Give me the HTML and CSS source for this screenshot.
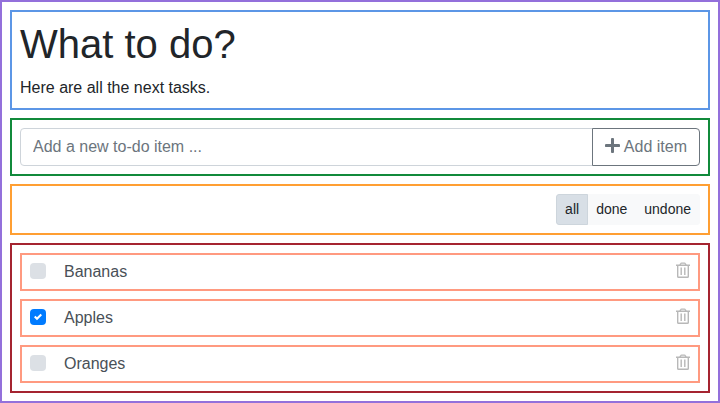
FILE: index.html
```html
<!DOCTYPE html>
<html lang="en">
<head>
<meta charset="utf-8">
<title>What to do?</title>
<link rel="stylesheet" href="styles.css">
</head>
<body>
<main class="app">
  <header class="intro">
    <h1>What to do?</h1>
    <p>Here are all the next tasks.</p>
  </header>
  <form class="new-item">
    <input class="new-input" type="text" placeholder="Add a new to-do item ..." aria-label="New item">
    <button class="add" type="button">
      <svg class="plus" width="15" height="15" viewBox="0 0 15 15" aria-hidden="true"><path d="M7.5 1.3v12.4M1.3 7.5h12.4" fill="none" stroke="currentColor" stroke-width="3" stroke-linecap="round"/></svg>
      <span>Add item</span>
    </button>
  </form>
  <nav class="filters">
    <div class="group">
      <button class="filter active" type="button">all</button>
      <button class="filter" type="button">done</button>
      <button class="filter" type="button">undone</button>
    </div>
  </nav>
  <ul class="list">
    <li class="item">
      <span class="check"></span>
      <span class="label">Bananas</span>
      <svg class="trash" width="14" height="17" viewBox="0 0 14 17" aria-hidden="true"><path d="M0 3.2h14M4 2.8l.8-1.3q.2-.4.7-.4h3q.5 0 .7.4l.8 1.3M1.7 3.4v11q0 .9.9.9h8.8q.9 0 .9-.9v-11M5.2 5.5v7.6M8.8 5.5v7.6"/></svg>
    </li>
    <li class="item">
      <span class="check checked"><svg width="8" height="8" viewBox="0 0 8 8"><path fill="#fff" d="M6.564.75l-3.59 3.612-1.538-1.55L0 4.26 2.974 7.25 8 2.193z"/></svg></span>
      <span class="label">Apples</span>
      <svg class="trash" width="14" height="17" viewBox="0 0 14 17" aria-hidden="true"><path d="M0 3.2h14M4 2.8l.8-1.3q.2-.4.7-.4h3q.5 0 .7.4l.8 1.3M1.7 3.4v11q0 .9.9.9h8.8q.9 0 .9-.9v-11M5.2 5.5v7.6M8.8 5.5v7.6"/></svg>
    </li>
    <li class="item">
      <span class="check"></span>
      <span class="label">Oranges</span>
      <svg class="trash" width="14" height="17" viewBox="0 0 14 17" aria-hidden="true"><path d="M0 3.2h14M4 2.8l.8-1.3q.2-.4.7-.4h3q.5 0 .7.4l.8 1.3M1.7 3.4v11q0 .9.9.9h8.8q.9 0 .9-.9v-11M5.2 5.5v7.6M8.8 5.5v7.6"/></svg>
    </li>
  </ul>
</main>
</body>
</html>
```
FILE: styles.css
```css
* { box-sizing: border-box; }

body {
  margin: 0;
  background: #fff;
  color: #212529;
  font: 16px/24px "Liberation Sans", Arial, sans-serif;
}

.app {
  display: flex;
  flex-direction: column;
  gap: 8px;
  height: 403px;
  padding: 8px;
  border: 2px solid #9370db;
}

.intro, .new-item, .filters, .list {
  margin: 0;
  padding: 8px;
  border: 2px solid;
}

.intro { border-color: #5c96e6; }

h1 {
  margin: 0 0 8px;
  font-size: 40px;
  font-weight: 400;
  line-height: 48px;
}

p { margin: 0; }

.new-item {
  display: flex;
  border-color: #118a3b;
}

.new-input {
  flex: 1;
  min-width: 0;
  height: 38px;
  padding: 6px 12px;
  border: 1px solid #ced4da;
  border-radius: 4px 0 0 4px;
  background: #fff;
  font: inherit;
}

.new-input::placeholder { color: #6c757d; opacity: 1; }

.add {
  display: flex;
  align-items: center;
  gap: 4px;
  height: 38px;
  margin-left: -1px;
  padding: 6px 12px;
  border: 1px solid #6c757d;
  border-radius: 0 4px 4px 0;
  background: #fff;
  color: #6c757d;
  font: inherit;
}

.plus { margin-bottom: 3px; }

.filters {
  display: flex;
  justify-content: flex-end;
  border-color: #ff9f32;
}

.group { display: flex; }

.filter {
  height: 31px;
  padding: 4px 8px;
  border: 1px solid #f8f9fa;
  background: #f8f9fa;
  color: #212529;
  font: 14px/21px "Liberation Sans", Arial, sans-serif;
}

.filter + .filter { margin-left: -1px; }
.filter:first-child { border-radius: 3px 0 0 3px; }
.filter:last-child { border-radius: 0 3px 3px 0; }

.filter.active {
  position: relative;
  z-index: 1;
  border-color: #cdd5dc;
  background: #d8dfe6;
}

.list {
  display: flex;
  flex-direction: column;
  gap: 8px;
  border-color: #a52430;
  list-style: none;
}

.item {
  display: flex;
  align-items: center;
  height: 38px;
  padding: 0 8px;
  border: 2px solid #ff9a80;
}

.check {
  display: flex;
  align-items: center;
  justify-content: center;
  width: 16px;
  height: 16px;
  margin: 0 18px 2px 0;
  border-radius: 4px;
  background: #dce0e5;
}

.check.checked { background: #007bff; }

.label {
  flex: 1;
  color: #495057;
}

.trash {
  margin-bottom: 3px;
  fill: none;
  stroke: #b8b8b8;
  stroke-width: 1.4;
}
```
